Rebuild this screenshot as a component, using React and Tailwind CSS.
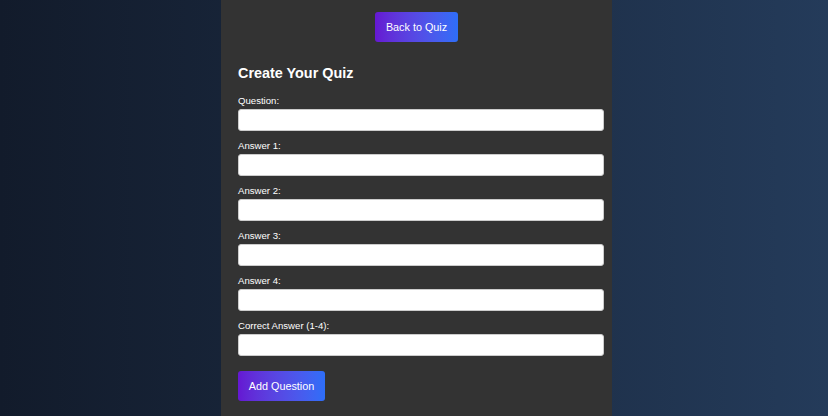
import React from "react";

const fields = [
  "Question:",
  "Answer 1:",
  "Answer 2:",
  "Answer 3:",
  "Answer 4:",
  "Correct Answer (1-4):",
];

const App = () => {
  return (
    <div
      className="h-screen w-full overflow-hidden bg-gradient-to-r from-[#121b2b] to-[#243b5a] flex justify-center"
      style={{ fontFamily: '"Liberation Sans", Arial, sans-serif' }}
    >
      <div className="w-[391px] h-full bg-[#333333] flex flex-col pt-[12px] pl-[17px] pr-[8px] ml-[5px]">
        <button className="self-center -ml-[9px] w-[83px] h-[30px] rounded-[3px] bg-gradient-to-r from-[#6517d2] to-[#2d6ef8] text-white text-[10.8px]">
          Back to Quiz
        </button>

        <h2 className="mt-[23px] text-white font-bold text-[14.4px] leading-[17px]">
          Create Your Quiz
        </h2>

        <form className="mt-[13px] flex flex-col">
          {fields.map((label, i) => (
            <div key={label} className={i > 0 ? "mt-[9px]" : ""}>
              <label className="block text-white text-[9.6px] leading-[11px] h-[11px]">
                {label}
              </label>
              <input
                type="text"
                className="mt-[3px] block w-[366px] h-[22px] rounded-[3px] bg-white border border-[#cccccc] outline-none"
              />
            </div>
          ))}

          <button
            type="button"
            className="mt-[15px] w-[87px] h-[30px] rounded-[3px] bg-gradient-to-r from-[#6517d2] to-[#2d6ef8] text-white text-[10.8px]"
          >
            Add Question
          </button>
        </form>
      </div>
    </div>
  );
};

export default App;
